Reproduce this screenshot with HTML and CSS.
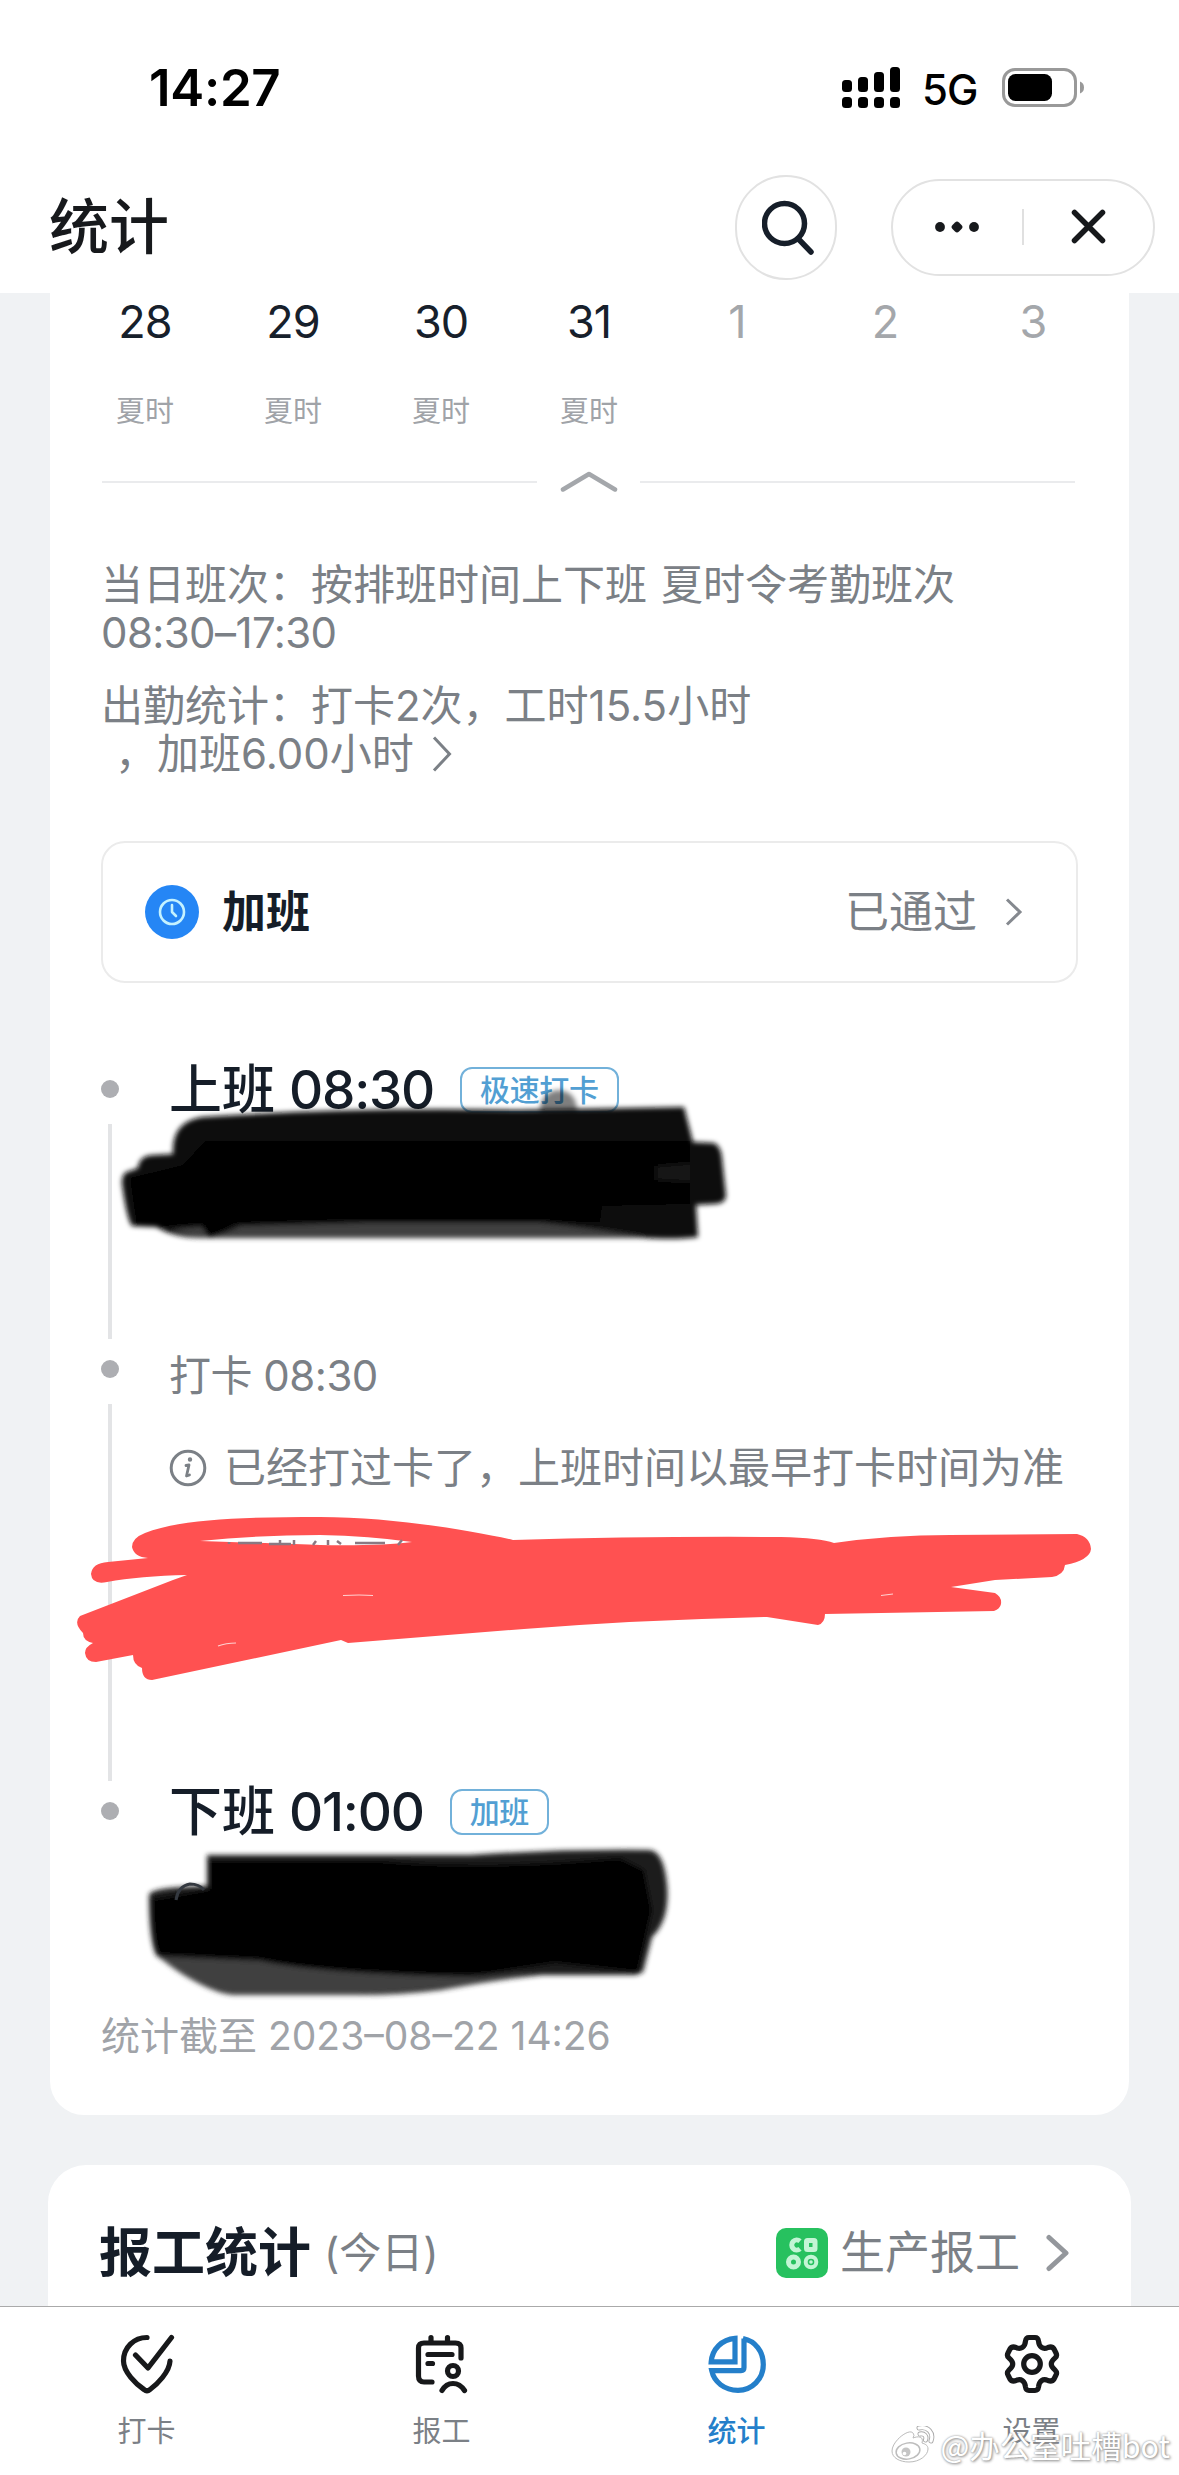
FILE: index.html
```html
<!DOCTYPE html>
<html lang="zh-CN">
<head>
<meta charset="utf-8">
<title>统计</title>
<link rel="stylesheet" href="styles.css">
</head>
<body>
<div class="app">
  <header class="top">
    <div class="status">
      <span class="clock">14:27</span>
      <svg class="signal" width="58" height="42" viewBox="0 0 58 42">
        <rect x="0" y="13" width="10" height="12" rx="3.5"/><rect x="16" y="10" width="10" height="15" rx="3.5"/><rect x="32" y="5" width="10" height="20" rx="3.5"/><rect x="48" y="0" width="10" height="25" rx="3.5"/>
        <rect x="0" y="30" width="10" height="11" rx="3.5"/><rect x="16" y="30" width="10" height="11" rx="3.5"/><rect x="32" y="30" width="10" height="11" rx="3.5"/><rect x="48" y="30" width="10" height="11" rx="3.5"/>
      </svg>
      <span class="network">5G</span>
      <svg class="battery" width="82" height="39" viewBox="0 0 82 39">
        <rect x="1.5" y="1.5" width="72" height="36" rx="11.5" fill="none" stroke="#999" stroke-width="3"/>
        <rect x="6" y="6" width="44" height="27" rx="7.5"/>
        <path d="M78 13.500Q82 15 82 19.500T78 25.500Z" fill="#999"/>
      </svg>
    </div>
    <div class="nav">
      <h1 class="title">统计</h1>
      <div class="search">
        <svg width="52" height="56" viewBox="0 0 52 56" fill="none" stroke="#161e29" stroke-width="5.500" stroke-linecap="round"><circle cx="22.500" cy="23.500" r="20"/><path d="M36 38.500 49 52"/></svg>
      </div>
      <div class="capsule">
        <svg class="more" width="44" height="12" viewBox="0 0 44 12" fill="#17191c"><circle cx="5" cy="6" r="4.900"/><path d="M20 1.500Q22-.5 24 1.500L26.500 4Q28.500 6 26.500 8L24 10.500Q22 12.500 20 10.500L17.500 8Q15.500 6 17.500 4Z"/><circle cx="39" cy="6" r="4.900"/></svg>
        <span class="capsule-line"></span>
        <svg class="close" width="36" height="36" viewBox="0 0 36 36" stroke="#17191c" stroke-width="5.500" stroke-linecap="round"><path d="M3.500 3.500 31.500 31.500M31.500 3.500 3.500 31.500"/></svg>
      </div>
    </div>
  </header>

  <main class="content">
    <section class="card">
      <div class="days">
        <div class="day">28</div><div class="day">29</div><div class="day">30</div><div class="day">31</div><div class="day next">1</div><div class="day next">2</div><div class="day next">3</div>
      </div>
      <div class="shifts">
        <div>夏时</div><div>夏时</div><div>夏时</div><div>夏时</div><div></div><div></div><div></div>
      </div>
      <div class="fold">
        <span></span>
        <svg width="58" height="24" viewBox="0 0 58 24" fill="none" stroke="#a4a7ab" stroke-width="4.500" stroke-linecap="round" stroke-linejoin="round"><path d="M3 19.500 29 4 55 19.500"/></svg>
        <span></span>
      </div>
      <div class="summary">
        <p>当日班次：按排班时间上下班<i class="space"></i>夏时令考勤班次<br><span class="range">08:30–17:30</span></p>
        <p>出勤统计：打卡2次，工时15.5小时<br><span class="overtime-line">，加班6.00小时</span><svg class="arrow" width="20" height="36" viewBox="0 0 20 36" fill="none" stroke="#7b8086" stroke-width="3"><path d="M2 1.500 17.500 18 2 34.500"/></svg></p>
      </div>
      <div class="approval">
        <svg width="54" height="54" viewBox="0 0 54 54" fill="none"><circle cx="27" cy="27" r="27" fill="#2586f5"/><g stroke="#c4f2ff" stroke-width="2.600" stroke-linecap="round" stroke-linejoin="round"><circle cx="27" cy="27" r="12"/><path d="M27 20V27L31 31"/></g></svg>
        <b>加班</b>
        <span>已通过</span>
        <svg width="18" height="28" viewBox="0 0 18 28" fill="none" stroke="#85898f" stroke-width="3"><path d="M2 1.500 15 14 2 26.500"/></svg>
      </div>

      <div class="timeline">
        <div class="item first">
          <div class="rail"></div>
          <div class="entry"><div class="head"><span class="cn">上班</span><span class="punch">08:30</span><span class="tag">极速打卡</span></div></div>
        </div>
        <div class="item second">
          <div class="rail"></div>
          <div class="entry">
            <div class="record">打卡 08:30</div>
            <div class="notice">
              <svg width="38" height="38" viewBox="0 0 38 38" fill="none" stroke="#7b8086"><circle cx="19" cy="19" r="16.800" stroke-width="3"/><path d="M17 16.500 20 16 17.500 27 20.500 26" stroke-width="2.800" stroke-linecap="round" stroke-linejoin="round"/><circle cx="21" cy="10.500" r="1.200" stroke-width="2"/></svg>
              <span>已经打过卡了，上班时间以最早打卡时间为准</span>
            </div>
          </div>
        </div>
        <div class="item third">
          <div class="rail"></div>
          <div class="entry"><div class="head"><span class="cn">下班</span><span class="punch">01:00</span><span class="tag">加班</span></div></div>
        </div>
      </div>
      <div class="deadline">统计截至 <span>2023–08–22 14:26</span></div>
    </section>

    <section class="card report">
      <h2>报工统计</h2>
      <span class="today">(今日)</span>
      <svg class="report-icon" width="52" height="50" viewBox="0 0 52 50">
        <rect width="52" height="50" rx="10" fill="#27c15f"/>
        <g fill="none" stroke="#c3f5d5" stroke-width="5"><path d="M24 13.200A5 5 0 1 0 24 20.800"/><rect x="30.500" y="12.500" width="8.500" height="9" rx="1"/><circle cx="17.500" cy="34" r="5"/><circle cx="35" cy="34" r="5.300" stroke-width="4"/></g>
        <circle cx="35" cy="34" r="1.800" fill="#c3f5d5"/>
      </svg>
      <span class="product">生产报工</span>
      <svg width="24" height="38" viewBox="0 0 24 38" fill="none" stroke="#94979c" stroke-width="5" stroke-linecap="round" stroke-linejoin="round"><path d="M3 3.500 20 19 3 34.500"/></svg>
    </section>
  </main>

  <nav class="tabs">
    <div class="tab">
      <svg width="60" height="60" viewBox="0 0 60 60" fill="none" stroke="#17181a" stroke-width="5.200" stroke-linecap="round" stroke-linejoin="round"><path d="M30 3.500C17 3.500 6.500 13.500 6.500 27 6.500 38 19 50 27 55.500Q30 58 33 55.500C40 50.500 52.500 38 53 27"/><path d="M18.500 21 31 34 54.500 3.500"/></svg>
      <span>打卡</span>
    </div>
    <div class="tab">
      <svg width="60" height="60" viewBox="0 0 60 60" fill="none" stroke="#17181a" stroke-width="5.200" stroke-linecap="round" stroke-linejoin="round"><path d="M20 48H12Q6.500 48 6.500 42V14Q6.500 9 12 9H43.500Q49 9 49 14V24M19 9V3.500M35.500 9V3.500M16 20.500H40M16 29.500H20.500"/><circle cx="41" cy="37" r="5.500"/><path d="M30 56.500Q34 49.500 41 49.500T52.500 56.500"/></svg>
      <span>报工</span>
    </div>
    <div class="tab active">
      <svg width="60" height="60" viewBox="0 0 60 60" fill="none" stroke="#247fca" stroke-width="5.200"><path d="M28 4.300V27.800H4.200C5.200 15 15 5.200 28 4.300Z"/><path d="M36 4.500C48.500 7 56.300 17.500 56.300 30.500 56.300 45 45 56.300 31 56.300 17.500 56.300 7 48 4.700 36.600H34Q37 36.600 37 33.600V4.500"/></svg>
      <span>统计</span>
    </div>
    <div class="tab">
      <svg width="60" height="60" viewBox="0 0 60 60" fill="none" stroke="#17181a" stroke-width="5.200" stroke-linejoin="round"><path d="M27 3.500H33Q36 3.500 36.500 7C37 13 41 16 46 13.500Q50 12 52 15L54 19Q55.500 22 53 24C48 28 48 32 53 36Q55.500 38.500 54 41L52 45Q50 48 46 46.500C41 44 37 47 36.500 53Q36 56.500 33 56.500H27Q24 56.500 23.500 53C23 47 19 44 14 46.500Q10 48 8 45L6 41Q4.500 38.500 7 36C12 32 12 28 7 24Q4.500 22 6 19L8 15Q10 12 14 13.500C19 16 23 13 23.500 7Q24 3.500 27 3.500Z"/><circle cx="30" cy="30" r="8.300"/></svg>
      <span>设置</span>
    </div>
  </nav>

  <svg class="scribbles" width="1179" height="2475" viewBox="0 0 1179 2475">
    <defs><filter id="soft" x="-10%" y="-20%" width="120%" height="140%"><feGaussianBlur stdDeviation="2.400"/></filter></defs>
    <g filter="url(#soft)">
      <path d="M540 1110Q541 1092 558 1090Q576 1091 577 1110Z" fill="#000" opacity=".5"/>
      <path d="M202 1117Q350 1107 520 1110L684 1107 693 1142 714 1143Q721 1146 722 1158L726 1196Q725 1204 714 1204L696 1205 698 1237Q680 1240 640 1238H200Q175 1238 156 1227L132 1226Q127 1220 122 1184Q121 1172 130 1171L138 1168Q139 1155 155 1155L173 1154Q171 1122 202 1117Z" fill="#0f0f0f"/>
      <path d="M205 1141 690 1141V1204L602 1206 600 1222 365 1222 240 1226 209 1238 200 1227 137 1226 130 1178 183 1165Z" fill="#000"/>
      <path d="M170 1230Q210 1225 240 1226L365 1223 540 1223Q590 1228 650 1238H200Z" fill="#414141"/>
      <path d="M656 1166 690 1163V1182L656 1180Z" fill="#141414"/>
      <path d="M200 1224 240 1227 209 1238Z" fill="#000"/>
      <path d="M207 1855H470Q560 1849 650 1850 664 1852 667 1885 670 1920 652 1937L643 1972 636 1975H542Q500 1979 441 1990 400 1995 358 1995H234Q205 1993 156 1955 149 1940 149 1895 150 1887 207 1886Z" fill="#1a1a1a"/>
      <path d="M210 1861H380Q480 1870 620 1858L644 1870 652 1910 638 1972 555 1963 470 1976Q330 1979 260 1960L160 1955Q152 1940 153 1899L210 1889Z" fill="#000"/>
      <path d="M160 1957 260 1961Q330 1975 480 1977L540 1972 450 1988 358 1995H234Q190 1985 160 1957Z" fill="#404040"/>
    </g>
    <path d="M176 1900Q178 1886 190 1884 199 1884 204 1890" fill="none" stroke="#343940" stroke-width="3"/>
    <path d="M132 1547Q132 1538 145 1533C180 1519 245 1517 320 1517 390 1517 470 1530 513 1540Q650 1536 781 1537 820 1538 834 1543 890 1535 950 1535L1077 1534Q1090 1537 1091 1549 1090 1560 1065 1565 1064 1575 1052 1577L995 1580 951 1587 995 1593Q1002 1597 1001 1604 1000 1609 994 1611L825 1614Q825 1623 818 1625L767 1617Q640 1620 524 1629L348 1643 341 1640 152 1680Q142 1680 142 1668 133 1665 133 1655L96 1662Q86 1662 85 1653 85 1647 93 1643 83 1641 83 1633 73 1623 80 1616L173 1580 187 1575Q140 1576 107 1582 92 1585 91 1574 92 1563 108 1562L148 1558Q134 1557 132 1547ZM200 1541Q290 1544 320 1545 380 1546 412 1542 370 1536 320 1535 260 1535 200 1541Z" fill="#ff5151" fill-rule="evenodd"/>
    <path d="M229 1542V1544M238 1543H262M269 1544H291M280 1540V1545M294 1540V1545M313 1545 316 1541M328 1540V1545M337 1541 341 1544M355 1543H385M398 1545 402 1540" fill="none" stroke="#897982" stroke-width="2.500"/>
    <path d="M343 1595.500Q360 1594.500 373 1595.500M218 1646Q226 1643 236 1643M881 1595.500 893 1594" fill="none" stroke="#ffd0d0" stroke-width="1.200"/>
  </svg>

  <div class="watermark">
    <svg width="44" height="38" viewBox="0 0 44 38" fill="none">
      <path d="M22 7C18 2 1 15 1 25 1 32 9 36 18 36 29 36 37 29 37 23 37 19 34 18 31 17 33 10 27 10 22 12Q24 9 22 7Z" fill="#fff" stroke="#bbb" stroke-width="1"/>
      <ellipse cx="17" cy="25" rx="12" ry="8" transform="rotate(-10 17 25)" fill="#fff" stroke="#bdbdbd" stroke-width="1.500"/>
      <circle cx="15" cy="26" r="4.500" fill="#c5c5c5"/><circle cx="13.500" cy="27.500" r="1.800" fill="#fff"/>
      <path d="M28 2C37 0 43 7 40 15M29 8C33 7 36 10 34.500 14" stroke="#aaa" stroke-width="5" stroke-linecap="round"/>
      <path d="M28 2C37 0 43 7 40 15M29 8C33 7 36 10 34.500 14" stroke="#fff" stroke-width="3.200" stroke-linecap="round"/>
    </svg>
    <span>@办公室吐槽bot</span>
  </div>
</div>
</body>
</html>
```
FILE: styles.css
```css
* { box-sizing: border-box; }
body { margin: 0; background: #fff; }
h1, h2, p { margin: 0; }
svg { display: block; flex: none; }

.app {
  position: relative;
  width: 1179px;
  height: 2475px;
  display: flex;
  flex-direction: column;
  overflow: hidden;
  background: #f0f2f4;
  color: #7b8086;
  font-family: Inter, "Noto Sans CJK SC", sans-serif;
  white-space: nowrap;
}

.top { height: 293px; flex: none; background: #fff; }
.status { height: 175px; padding: 0 95px 0 149px; display: flex; align-items: center; color: #000; }
.clock { font-size: 51px; font-weight: 600; letter-spacing: -.3px; }
.signal { margin-left: auto; }
.network { margin: 3px 0 0 22px; font-size: 42px; font-weight: 500; width: 56px; letter-spacing: -1px; }
.battery { margin-left: 24px; }
.nav { height: 104px; padding: 0 24px 0 49px; display: flex; align-items: center; }
.title { margin-right: auto; font-size: 60px; line-height: 80px; font-weight: 500; color: #17191c; }
.search { width: 102px; height: 105px; border: 2px solid #e2e2e2; border-radius: 51px; display: flex; align-items: center; justify-content: center; padding: 1px 0 0 3px; }
.capsule { width: 264px; height: 97px; margin-left: 54px; border: 2px solid #e2e2e2; border-radius: 49px; display: flex; align-items: center; }
.more { margin-left: 42px; }
.capsule-line { width: 2px; height: 36px; margin-left: 43px; background: #e0e0e0; }
.close { margin-left: 47px; }

.content { flex: 1; min-height: 0; overflow: hidden; }
.card { width: 1079px; height: 1822px; margin: 0 auto; padding: 0 52px; background: #fff; border-radius: 0 0 34px 34px; }
.days, .shifts { width: 1036px; margin-left: -31px; display: grid; grid-template-columns: repeat(7, 1fr); text-align: center; }
.day { font-size: 45px; line-height: 58px; letter-spacing: -1px; color: #17202b; }
.day.next { color: #a4a7ab; }
.shifts { margin-top: 41px; height: 40px; font-size: 29px; line-height: 40px; color: #a0a3a8; }
.fold { width: 973px; margin-top: 35px; height: 30px; display: flex; align-items: center; justify-content: space-between; }
.fold span { width: 435px; height: 2px; background: #eaebed; }
.summary { margin: 64px 0 0 -1px; font-size: 42px; line-height: 48px; }
.summary p + p { margin-top: 25px; }
.space { display: inline-block; width: 14px; }
.range { letter-spacing: -.6px; }
.overtime-line { margin-left: 14px; }
.arrow { display: inline-block; margin-left: 18px; vertical-align: -3px; }
.approval { height: 142px; width: 977px; margin: 63px 0 0 -1px; padding: 0 53px 0 42px; border: 2px solid #ebebeb; border-radius: 24px; display: flex; align-items: center; font-size: 44px; line-height: 60px; }
.approval b { margin-left: 23px; font-weight: 700; color: #151d28; }
.approval span { margin-left: auto; margin-right: 28px; }

.timeline { margin-top: 76px; height: 952px; }
.item { display: flex; }
.first { height: 280px; }
.second { height: 442px; }
.third { height: 230px; }
.rail { width: 16px; margin-right: 51px; display: flex; flex-direction: column; align-items: center; padding-top: 21px; gap: 26px; }
.rail::before { content: ""; width: 18px; height: 18px; flex: none; border-radius: 50%; background: #adaeb2; }
.rail::after { content: ""; width: 4px; flex: 1; background: #e3e4e6; }
.third .rail::after { display: none; }
.head { height: 62px; display: flex; align-items: center; color: #151d28; font-weight: 500; }
.cn { font-size: 53px; line-height: 62px; }
.punch { margin-left: 14px; font-size: 53px; line-height: 62px; letter-spacing: -1.2px; }
.tag { margin-left: 26px; height: 46px; padding: 0 18px; border: 2px solid #72b1da; border-radius: 12px; font-size: 30px; line-height: 42px; letter-spacing: -.4px; color: #529fd3; }
.record { margin-top: 7px; font-size: 42px; line-height: 60px; letter-spacing: -.5px; }
.notice { margin-top: 32px; display: flex; align-items: center; gap: 17px; font-size: 42px; line-height: 60px; }
.deadline { margin-left: -1px; font-size: 39px; line-height: 50px; color: #a0a3a8; }

.report { width: 1083px; height: 200px; margin-top: 50px; padding: 0 61px 24px 51px; border-radius: 38px 38px 0 0; display: flex; align-items: center; line-height: 70px; }
.report h2 { font-size: 53px; line-height: 70px; font-weight: 700; color: #151d28; }
.today { margin-left: 13px; font-size: 42px; }
.report-icon { margin-left: auto; }
.product { margin: 0 26px 0 12px; font-size: 45px; }

.tabs { height: 169px; flex: none; display: grid; grid-template-columns: repeat(4, 295px); margin-left: 0; background: #fff; border-top: 1px solid #aaa; }
.tab { display: flex; flex-direction: column; align-items: center; padding: 27px 2px 0 0; gap: 18px; font-size: 29px; line-height: 40px; }
.active { color: #247fca; font-weight: 500; }

.scribbles { position: absolute; left: 0; top: 0; pointer-events: none; }
.watermark { position: absolute; right: 9px; bottom: 10px; display: flex; align-items: center; gap: 5px; color: #fff; font: 30.5px/40px "Noto Sans CJK SC", sans-serif; text-shadow: 0 0 2px #999, 1px 1px 3px #888; }
```
